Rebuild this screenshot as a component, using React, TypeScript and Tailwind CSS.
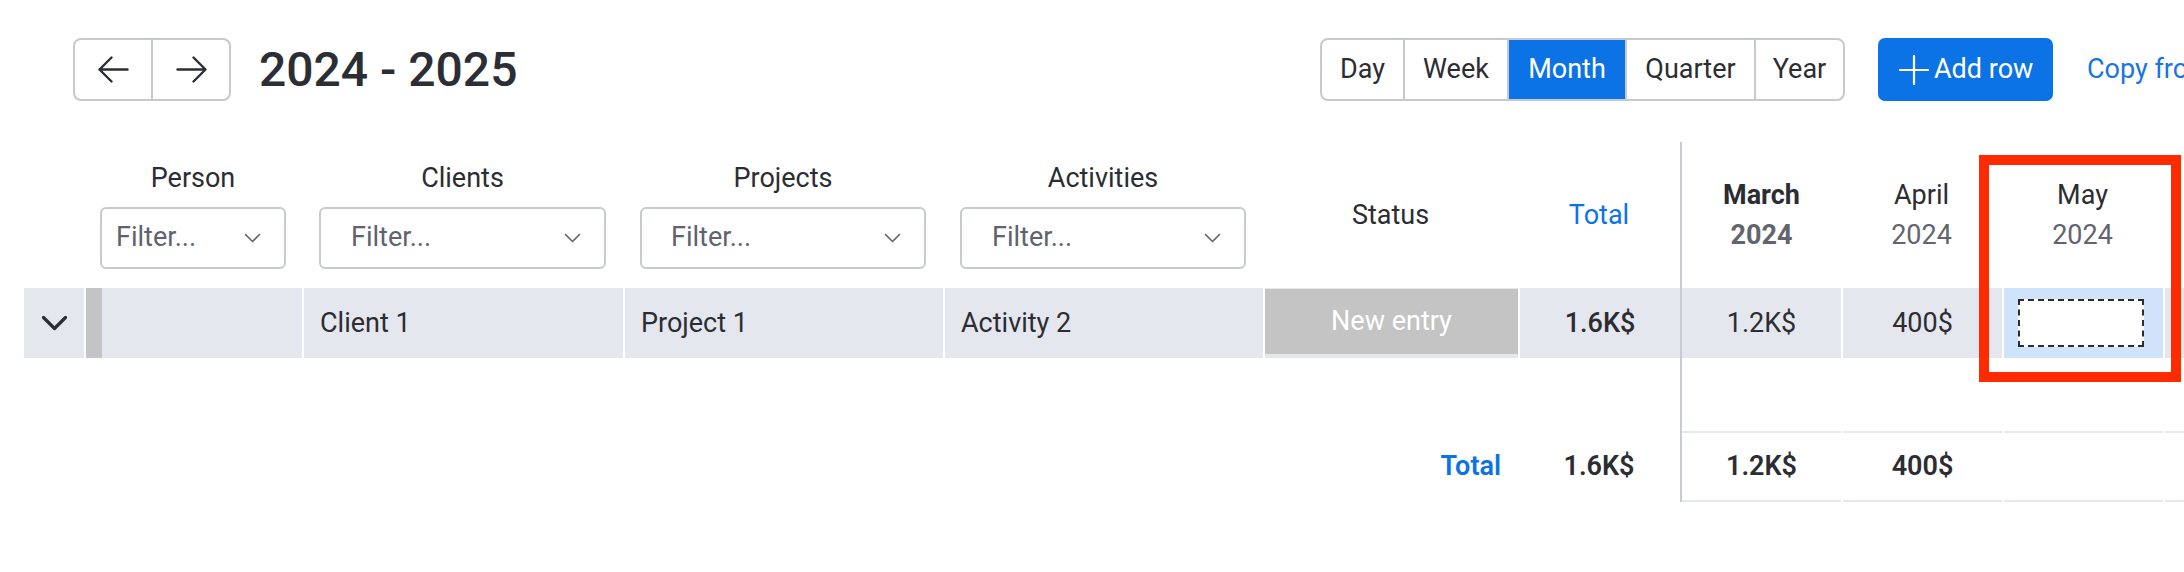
import React from 'react';

const COLS =
  'grid grid-cols-[60px_218px_321px_320px_320px_255px_162px_2px_159px_161px_161px_161px]';

function ArrowIcon({ dir }: { dir: 'left' | 'right' }) {
  return (
    <svg width="31" height="27" viewBox="0 0 31 27" fill="none" stroke="#2c2e35" strokeWidth="2.4" strokeLinecap="round" strokeLinejoin="round">
      {dir === 'left' ? (
        <path d="M29.5 13.5H1.5M13.5 1.5 1.5 13.5l12 12" />
      ) : (
        <path d="M1.5 13.5h28M17.5 1.5l12 12-12 12" />
      )}
    </svg>
  );
}

function SmallChevron() {
  return (
    <svg width="17" height="10" viewBox="0 0 17 10" fill="none" stroke="#5f6270" strokeWidth="1.6" strokeLinecap="round" strokeLinejoin="round">
      <path d="M1.5 1.5l7 7 7-7" />
    </svg>
  );
}

function RowChevron() {
  return (
    <svg width="27" height="16" viewBox="0 0 27 16" fill="none" stroke="#2c2e35" strokeWidth="3.2" strokeLinecap="round" strokeLinejoin="round">
      <path d="M2.5 2.5l11 11 11-11" />
    </svg>
  );
}

function PlusIcon() {
  return (
    <svg width="30" height="30" viewBox="0 0 30 30" fill="none" stroke="white" strokeWidth="2.2" strokeLinecap="round">
      <path d="M15 1v28M1 15h28" />
    </svg>
  );
}

function FilterHeader({ label, box, pad }: { label: string; box: string; pad: string }) {
  return (
    <div className="flex flex-col items-center justify-center">
      <div className="leading-[32px] mb-[13px]">{label}</div>
      <div className={`${box} ${pad} h-[62px] flex items-center justify-between pr-[23px] rounded-[6px] border-2 border-[#c7cad1] text-[#5f6270]`}>
        <span>Filter...</span>
        <SmallChevron />
      </div>
    </div>
  );
}

function MonthHeader({ month, bold }: { month: string; bold?: boolean }) {
  return (
    <div className={`flex flex-col items-center justify-center leading-[40px] ${bold ? 'font-bold' : ''}`}>
      <span>{month}</span>
      <span className="text-[#62656f]">2024</span>
    </div>
  );
}

export default function App() {
  const views = [
    { label: 'Day', w: 'w-[81px]' },
    { label: 'Week', w: 'w-[104px] border-l-2' },
    { label: 'Month', w: 'w-[118px] border-l-2 bg-[#0b73e6] text-white' },
    { label: 'Quarter', w: 'w-[129px] border-l-2' },
    { label: 'Year', w: 'w-[89px] border-l-2' },
  ];

  return (
    <div className="relative h-[572px] w-full overflow-hidden bg-white font-['Roboto',sans-serif] text-[27px] text-[#2c2d33]">
      {/* Toolbar */}
      <div className="flex items-center pt-[38px] whitespace-nowrap">
        <div className="w-[1320px] shrink-0 pl-[73px] flex items-center gap-[28px]">
          <div className="flex h-[63px] w-[158px] rounded-[8px] border-2 border-[#c6c9d0] overflow-hidden">
            <button className="flex-1 flex items-center justify-center">
              <ArrowIcon dir="left" />
            </button>
            <button className="flex-1 flex items-center justify-center border-l-2 border-[#c6c9d0]">
              <ArrowIcon dir="right" />
            </button>
          </div>
          <h1 className="text-[48px] font-medium leading-none text-[#2c2e35]">2024 - 2025</h1>
        </div>

        <div className="flex shrink-0 h-[63px] rounded-[8px] border-2 border-[#c6c9d0] overflow-hidden">
          {views.map((v) => (
            <div key={v.label} className={`${v.w} shrink-0 border-[#c6c9d0] flex items-center justify-center`}>
              {v.label}
            </div>
          ))}
        </div>

        <button className="ml-[33px] shrink-0 h-[63px] w-[175px] rounded-[7px] bg-[#0b73e6] text-white flex items-center pl-[21px] gap-[5px]">
          <PlusIcon />
          <span>Add row</span>
        </button>

        <span className="ml-[34px] shrink-0 text-[#1b74e4]">Copy from previous year</span>
      </div>

      {/* Table */}
      <div className="mt-[41px] pl-[24px] w-max">
        {/* Header */}
        <div className={`${COLS} h-[146px]`}>
          <div />
          <FilterHeader label="Person" box="w-[186px]" pad="pl-[14px]" />
          <FilterHeader label="Clients" box="w-[287px]" pad="pl-[30px]" />
          <FilterHeader label="Projects" box="w-[286px]" pad="pl-[29px]" />
          <FilterHeader label="Activities" box="w-[286px]" pad="pl-[30px]" />
          <div className="flex items-center justify-center">Status</div>
          <div className="flex items-center justify-center text-[#0b73e6]">Total</div>
          <div className="bg-[#c8cbd2]" />
          <MonthHeader month="March" bold />
          <MonthHeader month="April" />
          <MonthHeader month="May" />
          <div />
        </div>

        {/* Entry row */}
        <div className={`${COLS} h-[70px]`}>
          <div className="bg-[#e4e7ee] flex items-center justify-center">
            <RowChevron />
          </div>
          <div className="bg-[#e4e7ee] border-l-2 border-white flex">
            <div className="w-[16px] bg-[#c4c4c4]" />
          </div>
          <div className="bg-[#e4e7ee] border-l-2 border-white flex items-center pl-[16px]">Client 1</div>
          <div className="bg-[#e4e7ee] border-l-2 border-white flex items-center pl-[16px]">Project 1</div>
          <div className="bg-[#e4e7ee] border-l-2 border-white flex items-center pl-[16px]">Activity 2</div>
          <div className="bg-[#e4e7ee] border-l-2 border-white">
            <div className="h-[65px] mt-[1px] bg-[#c4c4c4] text-white flex items-center justify-center">New entry</div>
          </div>
          <div className="bg-[#e4e7ee] border-l-2 border-white flex items-center justify-center font-medium">1.6K$</div>
          <div className="bg-[#c8cbd2]" />
          <div className="bg-[#e4e7ee] flex items-center justify-center">1.2K$</div>
          <div className="bg-[#e4e7ee] border-l-2 border-white flex items-center justify-center">400$</div>
          <div className="bg-[#cfe3fb] border-l-2 border-white flex items-center pl-[14px]">
            <div className="w-[126px] h-[48px] bg-white border-2 border-dashed border-[#2c2d33]" />
          </div>
          <div className="bg-[#e4e7ee] border-l-2 border-white" />
        </div>

        {/* Empty space */}
        <div className={`${COLS} h-[73px]`}>
          <div className="col-start-8 bg-[#c8cbd2]" />
        </div>

        {/* Totals */}
        <div className={`${COLS} h-[71px] font-semibold`}>
          <div className="col-start-6 flex items-center justify-end pr-[17px] text-[#0b73e6]">Total</div>
          <div className="flex items-center justify-center">1.6K$</div>
          <div className="bg-[#c8cbd2]" />
          <div className="border-y-2 border-[#e5e8ee] flex items-center justify-center">1.2K$</div>
          <div className="ml-[2px] border-y-2 border-[#e5e8ee] flex items-center justify-center">400$</div>
          <div className="ml-[2px] border-y-2 border-[#e5e8ee]" />
          <div className="ml-[2px] border-y-2 border-[#e5e8ee]" />
        </div>
      </div>

      {/* Highlight annotation */}
      <div className="absolute left-[1979px] top-[155px] w-[202px] h-[227px] border-[10px] border-[#fe2a00]" />
    </div>
  );
}
